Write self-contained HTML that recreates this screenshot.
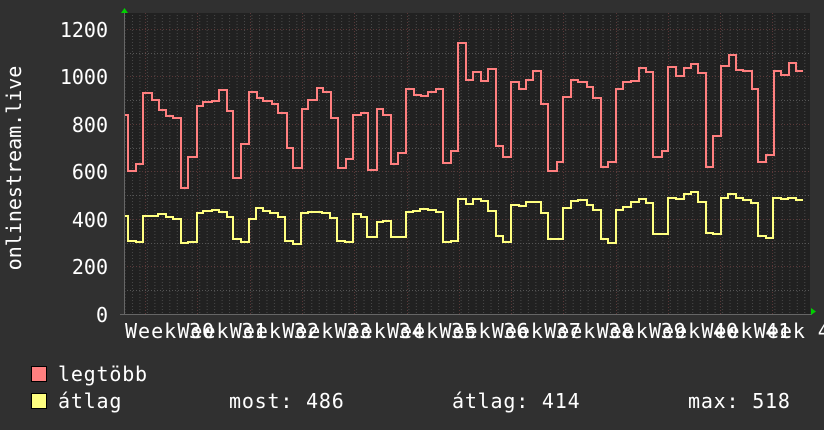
<!DOCTYPE html>
<html><head><meta charset="utf-8"><style>
html,body{margin:0;padding:0;background:#303030;}
svg{display:block;}
text{font-family:"DejaVu Sans Mono","Liberation Mono",monospace;fill:#fff;}
</style></head><body>
<svg width="824" height="430" viewBox="0 0 824 430" xmlns="http://www.w3.org/2000/svg">
<defs>
<pattern id="vmin" x="124.5" y="0" width="7.47" height="430" patternUnits="userSpaceOnUse">
<line x1="0.5" y1="0" x2="0.5" y2="430" stroke="#484848" stroke-width="1" stroke-dasharray="1,2"/>
</pattern>
</defs>
<rect width="824" height="430" fill="#303030"/>
<rect x="124" y="13" width="686" height="302" fill="#212121"/>
<rect x="124" y="13" width="686" height="302" fill="url(#vmin)"/>
<g stroke-dasharray="1,2" stroke-width="1">
<g stroke="#555">
<line x1="124" y1="290.5" x2="810" y2="290.5"/>
<line x1="124" y1="243.5" x2="810" y2="243.5"/>
<line x1="124" y1="195.5" x2="810" y2="195.5"/>
<line x1="124" y1="148.5" x2="810" y2="148.5"/>
<line x1="124" y1="100.5" x2="810" y2="100.5"/>
<line x1="124" y1="53.5" x2="810" y2="53.5"/>
</g>
<g stroke="#5a3838">
<line x1="124" y1="266.5" x2="810" y2="266.5"/>
<line x1="124" y1="219.5" x2="810" y2="219.5"/>
<line x1="124" y1="171.5" x2="810" y2="171.5"/>
<line x1="124" y1="124.5" x2="810" y2="124.5"/>
<line x1="124" y1="76.5" x2="810" y2="76.5"/>
<line x1="124" y1="29.5" x2="810" y2="29.5"/>
<line x1="145.5" y1="13" x2="145.5" y2="315"/>
<line x1="197.5" y1="13" x2="197.5" y2="315"/>
<line x1="250.5" y1="13" x2="250.5" y2="315"/>
<line x1="302.5" y1="13" x2="302.5" y2="315"/>
<line x1="354.5" y1="13" x2="354.5" y2="315"/>
<line x1="407.5" y1="13" x2="407.5" y2="315"/>
<line x1="459.5" y1="13" x2="459.5" y2="315"/>
<line x1="511.5" y1="13" x2="511.5" y2="315"/>
<line x1="563.5" y1="13" x2="563.5" y2="315"/>
<line x1="616.5" y1="13" x2="616.5" y2="315"/>
<line x1="668.5" y1="13" x2="668.5" y2="315"/>
<line x1="720.5" y1="13" x2="720.5" y2="315"/>
<line x1="772.5" y1="13" x2="772.5" y2="315"/>
</g>
</g>
<line x1="124.5" y1="10" x2="124.5" y2="315" stroke="#666"/>
<line x1="120" y1="314.5" x2="812" y2="314.5" stroke="#666"/>
<polygon points="121,13 124.5,8 128,13" fill="#00d000"/>
<polygon points="811,308 816,311.5 811,315" fill="#00d000"/>
<path fill="none" stroke="#ff7f7f" stroke-width="2" d="M125 115 H128 V171 H136 V164 H143 V93 H152 V100 H159 V110 H166 V116 H173 V118 H181 V188 H188 V157 H197 V106 H203 V102 H212 V101 H219 V90 H227 V111 H233 V178 H241 V144 H249 V92 H257 V98 H263 V101 H272 V104 H278 V113 H287 V148 H293 V168 H302 V109 H308 V100 H317 V88 H323 V92 H331 V118 H338 V168 H346 V159 H353 V115 H361 V113 H368 V170 H377 V109 H383 V115 H391 V164 H398 V153 H406 V89 H414 V95 H421 V96 H428 V92 H436 V89 H443 V163 H451 V151 H458 V43 H466 V80 H473 V72 H481 V81 H488 V69 H496 V146 H503 V157 H511 V82 H519 V89 H526 V80 H533 V71 H541 V104 H548 V171 H557 V162 H563 V97 H571 V80 H578 V82 H587 V87 H593 V98 H601 V167 H608 V162 H616 V89 H623 V82 H631 V81 H639 V68 H646 V72 H653 V157 H662 V151 H668 V67 H676 V76 H684 V68 H691 V64 H698 V73 H706 V167 H713 V136 H721 V66 H729 V55 H736 V70 H743 V71 H752 V89 H758 V162 H766 V155 H774 V71 H781 V75 H789 V63 H796 V71 H803"/>
<path fill="none" stroke="#ffff80" stroke-width="2" d="M125 216 H128 V241 H136 V242 H143 V216 H158 V214 H166 V217 H173 V219 H181 V243 H188 V242 H197 V213 H203 V211 H212 V210 H219 V212 H227 V217 H233 V239 H241 V242 H249 V219 H256 V208 H263 V211 H270 V213 H278 V217 H285 V241 H293 V244 H301 V213 H308 V212 H322 V213 H330 V218 H337 V241 H345 V242 H353 V214 H361 V217 H367 V237 H377 V222 H383 V221 H391 V237 H406 V212 H413 V211 H420 V209 H428 V210 H436 V212 H443 V242 H451 V241 H458 V199 H466 V204 H473 V199 H481 V201 H488 V211 H496 V236 H503 V242 H511 V205 H519 V206 H526 V202 H541 V213 H548 V239 H563 V208 H571 V201 H578 V200 H587 V205 H593 V210 H601 V239 H608 V243 H616 V210 H623 V207 H631 V202 H639 V199 H646 V203 H653 V234 H668 V198 H676 V199 H684 V194 H691 V192 H698 V202 H706 V233 H713 V234 H721 V198 H728 V194 H736 V198 H743 V200 H751 V203 H758 V236 H766 V238 H773 V198 H781 V199 H788 V198 H796 V200 H803"/>
<g font-size="20" text-anchor="end">
<text x="108" y="37">1200</text>
<text x="108" y="84">1000</text>
<text x="108" y="132">800</text>
<text x="108" y="179">600</text>
<text x="108" y="227">400</text>
<text x="108" y="274">200</text>
<text x="108" y="322">0</text>
</g>
<text x="21" y="168" font-size="20" text-anchor="middle" transform="rotate(-90 21 168)">onlinestream.live</text>
<g font-size="20" letter-spacing="1">
<text x="125" y="338">Week</text><text x="177.4" y="338">Week</text><text x="229.8" y="338">Week</text><text x="282.2" y="338">Week</text><text x="334.6" y="338">Week</text><text x="387" y="338">Week</text><text x="439.4" y="338">Week</text><text x="491.8" y="338">Week</text><text x="544.2" y="338">Week</text><text x="596.6" y="338">Week</text><text x="649" y="338">Week</text><text x="701.4" y="338">Week</text><text x="753.8" y="338">Week</text>
<text x="189" y="338">30</text><text x="241.4" y="338">31</text><text x="293.8" y="338">32</text><text x="346.2" y="338">33</text><text x="398.6" y="338">34</text><text x="451" y="338">35</text><text x="503.4" y="338">36</text><text x="555.8" y="338">37</text><text x="608.2" y="338">38</text><text x="660.6" y="338">39</text><text x="713" y="338">40</text><text x="765.4" y="338">41</text><text x="817.8" y="338">42</text>
</g>
<rect x="31.5" y="366.5" width="15" height="15" fill="#ff8080" stroke="#000"/>
<rect x="31.5" y="393.5" width="15" height="15" fill="#ffff80" stroke="#000"/>
<g font-size="20" letter-spacing="0.8">
<text x="58" y="381">legtöbb</text>
<text x="58" y="408">átlag</text>
<text x="229" y="408">most: 486</text>
<text x="452" y="408">átlag: 414</text>
<text x="688" y="408">max: 518</text>
</g>
</svg>
</body></html>
